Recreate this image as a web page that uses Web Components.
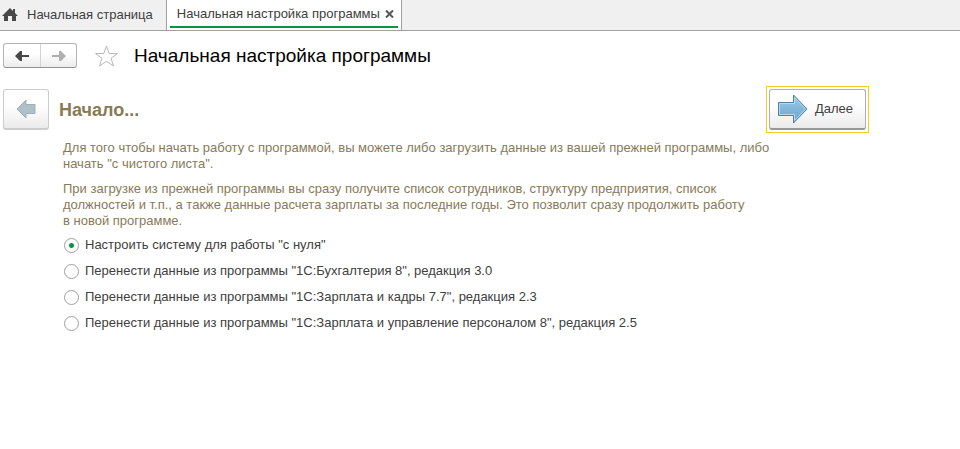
<!DOCTYPE html>
<html lang="ru">
<head>
<meta charset="utf-8">
<meta name="viewport" content="width=device-width, initial-scale=1">
<title>Начальная настройка программы</title>
<style>
  body {
    margin: 0;
    background: #ffffff;
    color: #404040;
    font: 13px/16px "Liberation Sans", Arial, sans-serif;
  }
</style>
</head>
<body>

<app-tabs>
  <app-tab icon="home">Начальная страница</app-tab>
  <app-tab active>Начальная настройка программы</app-tab>
</app-tabs>

<main>
  <form-header>Начальная настройка программы</form-header>

  <setup-wizard>
    <span slot="title">Начало...</span>
    <p slot="intro">Для того чтобы начать работу с программой, вы можете либо загрузить данные из вашей прежней программы, либо начать "с чистого листа".</p>
    <p slot="intro">При загрузке из прежней программы вы сразу получите список сотрудников, структуру предприятия, список должностей и т.п., а также данные расчета зарплаты за последние годы. Это позволит сразу продолжить работу в&nbsp;новой программе.</p>
    <setup-modes slot="modes"></setup-modes>
  </setup-wizard>
</main>

<script>
class AppTabs extends HTMLElement {
  constructor() {
    super();
    this.attachShadow({ mode: "open" });
  }

  connectedCallback() {
    this.shadowRoot.innerHTML = `
      <style>
        :host {
          display: block;
          background: #f0f0f0;
          border-bottom: 1px solid #a0a0a0;
        }

        nav {
          display: flex;
          height: 30px;
        }
      </style>

      <nav aria-label="Открытые окна">
        <slot></slot>
      </nav>
    `;
  }
}

class AppTab extends HTMLElement {
  constructor() {
    super();
    this.attachShadow({ mode: "open" });
  }

  connectedCallback() {
    const active = this.hasAttribute("active");
    const home = this.getAttribute("icon") === "home";

    this.shadowRoot.innerHTML = `
      <style>
        :host {
          display: block;
        }

        :host([active]) {
          background: #ffffff;
          border: 1px solid #a0a0a0;
          border-width: 0 1px;
          padding: 0 3px;
        }

        .tab {
          display: flex;
          align-items: center;
          height: 28px;
          padding: 1px 13px 0 0;
          box-sizing: border-box;
        }

        :host([active]) .tab {
          padding: 2px 4px 0 7px;
          gap: 5px;
          border-bottom: 2px solid #009646;
        }

        a {
          display: flex;
          align-items: center;
          gap: 9px;
          color: inherit;
          text-decoration: none;
        }

        a svg {
          margin-left: 2px;
        }

        .close {
          display: flex;
          padding: 0;
          border: 0;
          background: none;
        }
      </style>

      <div class="tab">
        <a href="#" ${active ? 'aria-current="page"' : ""}>
          ${home ? `
            <svg width="16" height="13" viewBox="0 0 16 13" aria-hidden="true">
              <path fill="#484848" d="M8 0 L11 3 V1 H13 V5 L16 8 H14 V13 H10 V8 H6 V13 H2 V8 H0 Z"/>
            </svg>` : ""}
          <slot></slot>
        </a>
        ${active ? `
          <button class="close" type="button" aria-label="Закрыть">
            <svg width="9" height="8" viewBox="0 0 9 8" aria-hidden="true">
              <path stroke="#555555" stroke-width="2" d="M1 .5 L8 7.5 M8 .5 L1 7.5"/>
            </svg>
          </button>` : ""}
      </div>
    `;
  }
}

class FormHeader extends HTMLElement {
  constructor() {
    super();
    this.attachShadow({ mode: "open" });
  }

  connectedCallback() {
    this.shadowRoot.innerHTML = `
      <style>
        :host {
          display: flex;
          align-items: center;
          padding: 12px 3px 0;
        }

        .history {
          display: flex;
          border: 1px solid #b4b4b4;
          border-bottom-color: #949494;
          border-radius: 3px;
          background: linear-gradient(#ffffff 40%, #ececec);
        }

        .history button {
          display: flex;
          align-items: center;
          justify-content: center;
          width: 36px;
          height: 23px;
          padding: 0;
          border: 0;
          background: none;
          color: #484848;
        }

        .history button + button {
          border-left: 1px solid #d4d4d4;
          color: #b0b0b0;
        }

        .star {
          display: flex;
          margin: 0 15px 0 17px;
          padding: 0;
          border: 0;
          background: none;
        }

        h1 {
          margin: 0;
          color: #000000;
          font-size: 19px;
          font-weight: 400;
          line-height: 24px;
        }
      </style>

      <div class="history">
        <button type="button" aria-label="Назад">
          <svg width="14" height="10" viewBox="0 0 14 10" aria-hidden="true">
            <path fill="currentColor" d="M0 5 L5 0 H7 V4 H14 V6 H7 V10 H5 Z"/>
          </svg>
        </button>
        <button type="button" aria-label="Вперед">
          <svg width="14" height="10" viewBox="0 0 14 10" aria-hidden="true">
            <path fill="currentColor" d="M14 5 L9 0 H7 V4 H0 V6 H7 V10 H9 Z"/>
          </svg>
        </button>
      </div>
      <button class="star" type="button" aria-label="В избранное">
        <svg width="25" height="24" viewBox="0 0 25 24" aria-hidden="true">
          <path fill="#ffffff" stroke="#b4b8be" d="M12.500 2 L15.200 9.500 H23.500 L17 14.300 L19.500 22 L12.500 17.300 L5.500 22 L8 14.300 L1.500 9.500 H9.800 Z"/>
        </svg>
      </button>
      <h1><slot></slot></h1>
    `;
  }
}

class SetupWizard extends HTMLElement {
  constructor() {
    super();
    this.attachShadow({ mode: "open" });
  }

  connectedCallback() {
    this.shadowRoot.innerHTML = `
      <style>
        :host {
          display: block;
          max-width: 866px;
          padding: 18px 0 16px 3px;
        }

        header {
          display: flex;
          align-items: center;
          gap: 10px;
        }

        h2 {
          flex: 1;
          margin: 0;
          color: #877b55;
          font-size: 18px;
          line-height: 24px;
        }

        button {
          display: flex;
          align-items: center;
          justify-content: center;
          height: 41px;
          padding: 0 12px 0 8px;
          gap: 7px;
          box-sizing: border-box;
          border: 1px solid #b0b0b0;
          border-bottom: 2px solid #989898;
          border-radius: 3px;
          background: linear-gradient(#ffffff 40%, #ebebeb);
          color: #404040;
          font: inherit;
        }

        .back {
          width: 46px;
          padding: 0;
          border-color: #cccccc;
        }

        /* frame of the default command */
        .default {
          padding: 2px;
          border: 1px solid #fac81e;
        }

        .body {
          max-width: 710px;
          padding: 7px 0 0 60px;
        }

        .intro {
          display: flex;
          flex-direction: column;
          gap: 9px;
          color: #877b55;
        }

        ::slotted(p) {
          margin: 0;
        }
      </style>

      <header>
        <button class="back" type="button" aria-label="Назад" disabled>
          <svg width="20" height="20" viewBox="0 0 20 20" aria-hidden="true">
            <path fill="#b0c0c9" stroke="#9cafba" d="M1 10 L10 1 V5.500 H19 V14.500 H10 V19 Z"/>
          </svg>
        </button>
        <h2><slot name="title"></slot></h2>
        <div class="default">
          <button type="button">
            <svg width="30" height="30" viewBox="0 0 30 30" aria-hidden="true">
              <defs>
                <linearGradient id="next" x1="0" y1="0" x2="0" y2="1">
                  <stop offset="0" stop-color="#9ccbe6"/>
                  <stop offset="1" stop-color="#69a3cf"/>
                </linearGradient>
              </defs>
              <path fill="url(#next)" stroke="#4c81a5" d="M.5 8.500 H15.500 V1 L29 15 L15.500 29 V21.500 H.5 Z"/>
              <path fill="none" stroke="#b4daee" d="M1.500 20.500 V9.500 H16.500 V3.500 L27.500 15 L16.500 26.500 V20.500 Z"/>
            </svg>
            Далее
          </button>
        </div>
      </header>
      <div class="body">
        <div class="intro">
          <slot name="intro"></slot>
        </div>
        <slot name="modes"></slot>
      </div>
    `;
  }
}

// All the radios live in one shadow root, otherwise they would not form a group
class SetupModes extends HTMLElement {
  constructor() {
    super();
    this.attachShadow({ mode: "open" });
  }

  connectedCallback() {
    this.shadowRoot.innerHTML = `
      <style>
        :host {
          display: block;
          padding-top: 8px;
        }

        fieldset {
          display: flex;
          flex-direction: column;
          align-items: flex-start;
          gap: 10px;
          margin: 0;
          padding: 0;
          border: 0;
        }

        label {
          display: flex;
          align-items: center;
          gap: 6px;
        }

        input {
          appearance: none;
          flex: none;
          width: 15px;
          height: 15px;
          margin: 0 0 0 1px;
          box-sizing: border-box;
          border: 1px solid #a0a0a0;
          border-radius: 50%;
          background: #ffffff;
        }

        input:checked {
          background: radial-gradient(circle, #009646 2px, #ffffff 3px);
        }
      </style>

      <fieldset aria-label="Способ начала работы">
        <label>
          <input type="radio" name="mode" value="empty" checked>
          <span>Настроить систему для работы "с нуля"</span>
        </label>
        <label>
          <input type="radio" name="mode" value="accounting">
          <span>Перенести данные из программы "1С:Бухгалтерия 8", редакция 3.0</span>
        </label>
        <label>
          <input type="radio" name="mode" value="salary77">
          <span>Перенести данные из программы "1С:Зарплата и кадры 7.7", редакция 2.3</span>
        </label>
        <label>
          <input type="radio" name="mode" value="salary8">
          <span>Перенести данные из программы "1С:Зарплата и управление персоналом 8", редакция 2.5</span>
        </label>
      </fieldset>
    `;
  }
}

customElements.define("app-tabs", AppTabs);
customElements.define("app-tab", AppTab);
customElements.define("form-header", FormHeader);
customElements.define("setup-wizard", SetupWizard);
customElements.define("setup-modes", SetupModes);
</script>
</body>
</html>
